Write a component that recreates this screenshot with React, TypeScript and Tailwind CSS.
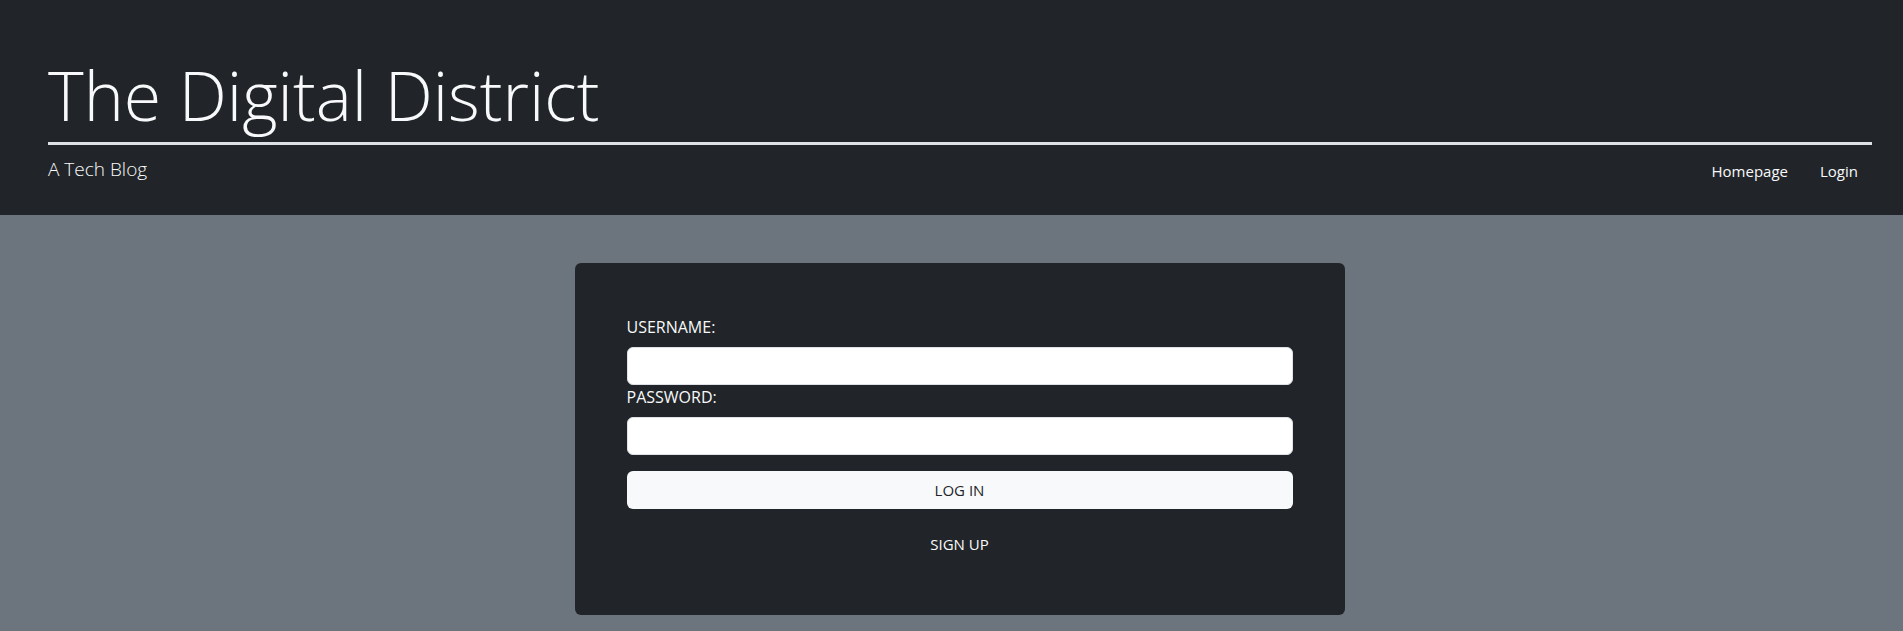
export default function App() {
  return (
    <div className="min-h-screen bg-[#6c757d] font-['Open_Sans',sans-serif] text-base leading-6 text-[#f8f9fa]">
      <header className="bg-[#212529] pt-12 pr-[31px] pb-8 pl-12">
        <h1 className="border-b-3 border-[#dee2e6] text-[68px] leading-[94px] font-light">The Digital District</h1>
        <div className="flex items-start justify-between pt-2.5">
          <p className="text-[19px] leading-7 font-light">A Tech Blog</p>
          <nav className="flex gap-8 pt-1 pr-3.5 text-[15px]">
            <a href="#home">Homepage</a>
            <a href="#login">Login</a>
          </nav>
        </div>
      </header>
      <main className="flex justify-center pt-12 pr-4 pb-4 pl-8">
        <form className="flex w-full max-w-[770px] flex-col rounded-md bg-[#212529] px-13 pt-13 pb-[59px]">
          <label htmlFor="username" className="mb-2">USERNAME:</label>
          <input id="username" type="text" className="h-[38px] rounded-md border border-[#dee2e6] bg-white px-3 text-[#212529]" />
          <label htmlFor="password" className="mb-2">PASSWORD:</label>
          <input id="password" type="password" className="h-[38px] rounded-md border border-[#dee2e6] bg-white px-3 text-[#212529]" />
          <button type="submit" className="mt-4 h-[38px] rounded-md bg-[#f8f9fa] text-[15px] text-[#212529]">LOG IN</button>
          <a href="#signup" className="mt-[23px] self-center text-[15px]">SIGN UP</a>
        </form>
      </main>
    </div>
  );
}
